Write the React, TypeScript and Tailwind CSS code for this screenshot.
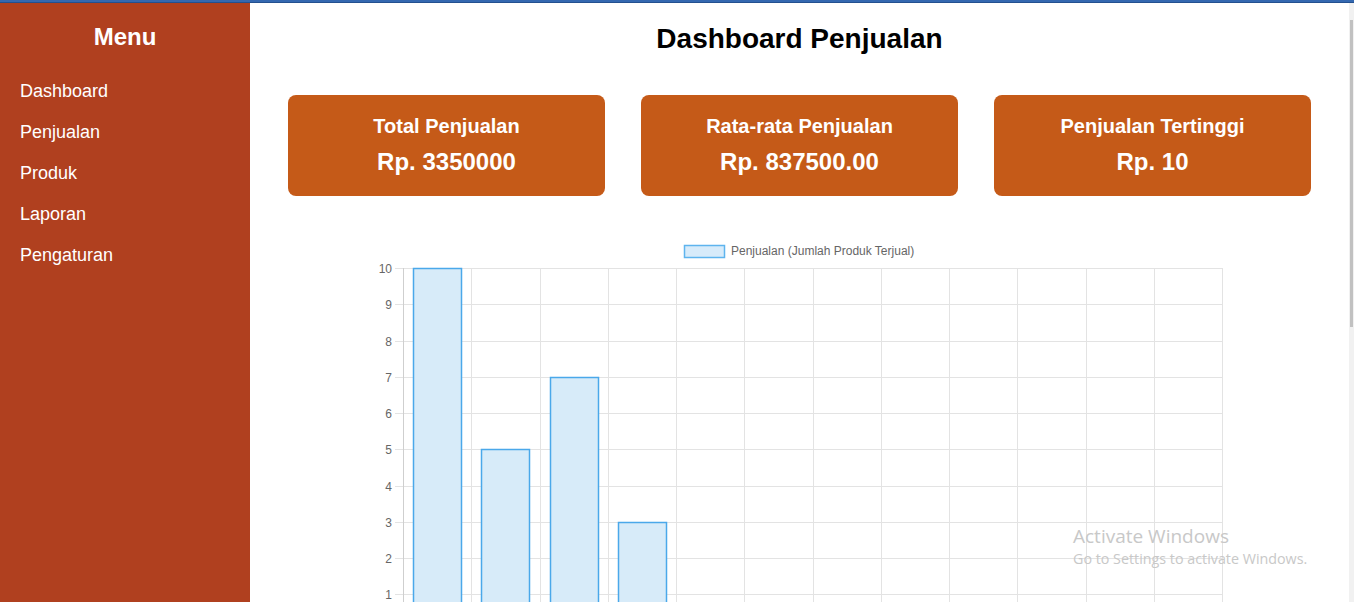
const menuItems = ['Dashboard', 'Penjualan', 'Produk', 'Laporan', 'Pengaturan'];

const stats = [
  { title: 'Total Penjualan', value: 'Rp. 3350000' },
  { title: 'Rata-rata Penjualan', value: 'Rp. 837500.00' },
  { title: 'Penjualan Tertinggi', value: 'Rp. 10' },
];

const sales = [10, 5, 7, 3, 0, 0, 0, 0, 0, 0, 0, 0];

// chart geometry, in svg pixels (svg starts at x=250, y=230 of the page)
const left = 153;
const right = 972;
const top = 38;
const unit = 36.25;
const zero = top + unit * 10;
const catW = (right - left) / sales.length;

function SalesChart() {
  return (
    <svg width="1099" height="440" className="block" style={{ fontFamily: '"Liberation Sans", Arial, sans-serif' }}>
      {/* legend */}
      <rect x="434.5" y="15.5" width="40" height="12" fill="#d7ebfa" stroke="#5eb4ee" strokeWidth="1.5" />
      <text x="481" y="25" fontSize="12" fill="#666">
        Penjualan (Jumlah Produk Terjual)
      </text>

      {/* horizontal grid + y labels */}
      {Array.from({ length: 11 }).map((_, i) => {
        const y = Math.round(zero - i * unit) + 0.5;
        return (
          <g key={i}>
            <line x1={left - 8} x2={right} y1={y} y2={y} stroke="#e3e3e3" />
            {i > 0 && (
              <text x={left - 11} y={y + 4} fontSize="12" fill="#666" textAnchor="end">
                {i}
              </text>
            )}
          </g>
        );
      })}

      {/* vertical grid */}
      {Array.from({ length: sales.length + 1 }).map((_, i) => {
        const x = Math.round(left + i * catW) + 0.5;
        return <line key={i} x1={x} x2={x} y1={top} y2={zero + 8} stroke={i === 0 ? '#cfcfcf' : '#e3e3e3'} />;
      })}

      {/* bars */}
      {sales.map((v, i) =>
        v > 0 ? (
          <rect
            key={i}
            x={Math.round(left + i * catW + 10) + 0.5}
            y={Math.round(zero - v * unit) + 0.5}
            width="48"
            height={v * unit}
            fill="#d7ebf9"
            stroke="#4aa8ea"
            strokeWidth="1.5"
          />
        ) : null
      )}
    </svg>
  );
}

export default function App() {
  return (
    <div className="relative min-h-[900px] bg-white font-['Liberation_Sans',Arial,sans-serif]">
      <div className="h-[3px] bg-[#3468b0] border-b border-[#23508f]" />
      <div className="flex min-h-[897px]">
        <aside className="w-[250px] shrink-0 bg-[#b0401f] text-white">
          <h2 className="pt-[19px] text-center text-[24px] font-bold leading-[30px]">Menu</h2>
          <ul className="mt-[19px] flex flex-col">
            {menuItems.map((item) => (
              <li key={item} className="pl-5 text-[18px] leading-[41px]">
                {item}
              </li>
            ))}
          </ul>
        </aside>

        <main className="w-[1099px] flex flex-col items-center pt-[20px]">
          <h1 className="text-[28px] font-bold leading-[32px] text-black">Dashboard Penjualan</h1>

          <div className="mt-[40px] flex gap-9">
            {stats.map((s) => (
              <div
                key={s.title}
                className="w-[317px] h-[101px] rounded-lg bg-[#c55a18] text-white flex flex-col items-center pt-[19px]"
              >
                <div className="text-[20px] font-bold leading-[24px]">{s.title}</div>
                <div className="mt-[10px] text-[24px] font-bold leading-[28px]">{s.value}</div>
              </div>
            ))}
          </div>

          <div className="mt-[34px] self-start">
            <SalesChart />
          </div>
        </main>

        <div className="w-[5px] shrink-0 bg-[#f1f1f1] pt-[17px]">
          <div className="ml-[1px] h-[307px] w-[3px] bg-[#c1c1c1]" />
        </div>
      </div>

      <div className="absolute left-[1073px] top-[523px] font-['Open_Sans','Noto_Sans',sans-serif] text-[#c8c8c8]">
        <div className="text-[19px] leading-[26px]">Activate Windows</div>
        <div className="text-[14.3px] leading-[20px]">Go to Settings to activate Windows.</div>
      </div>
    </div>
  );
}
